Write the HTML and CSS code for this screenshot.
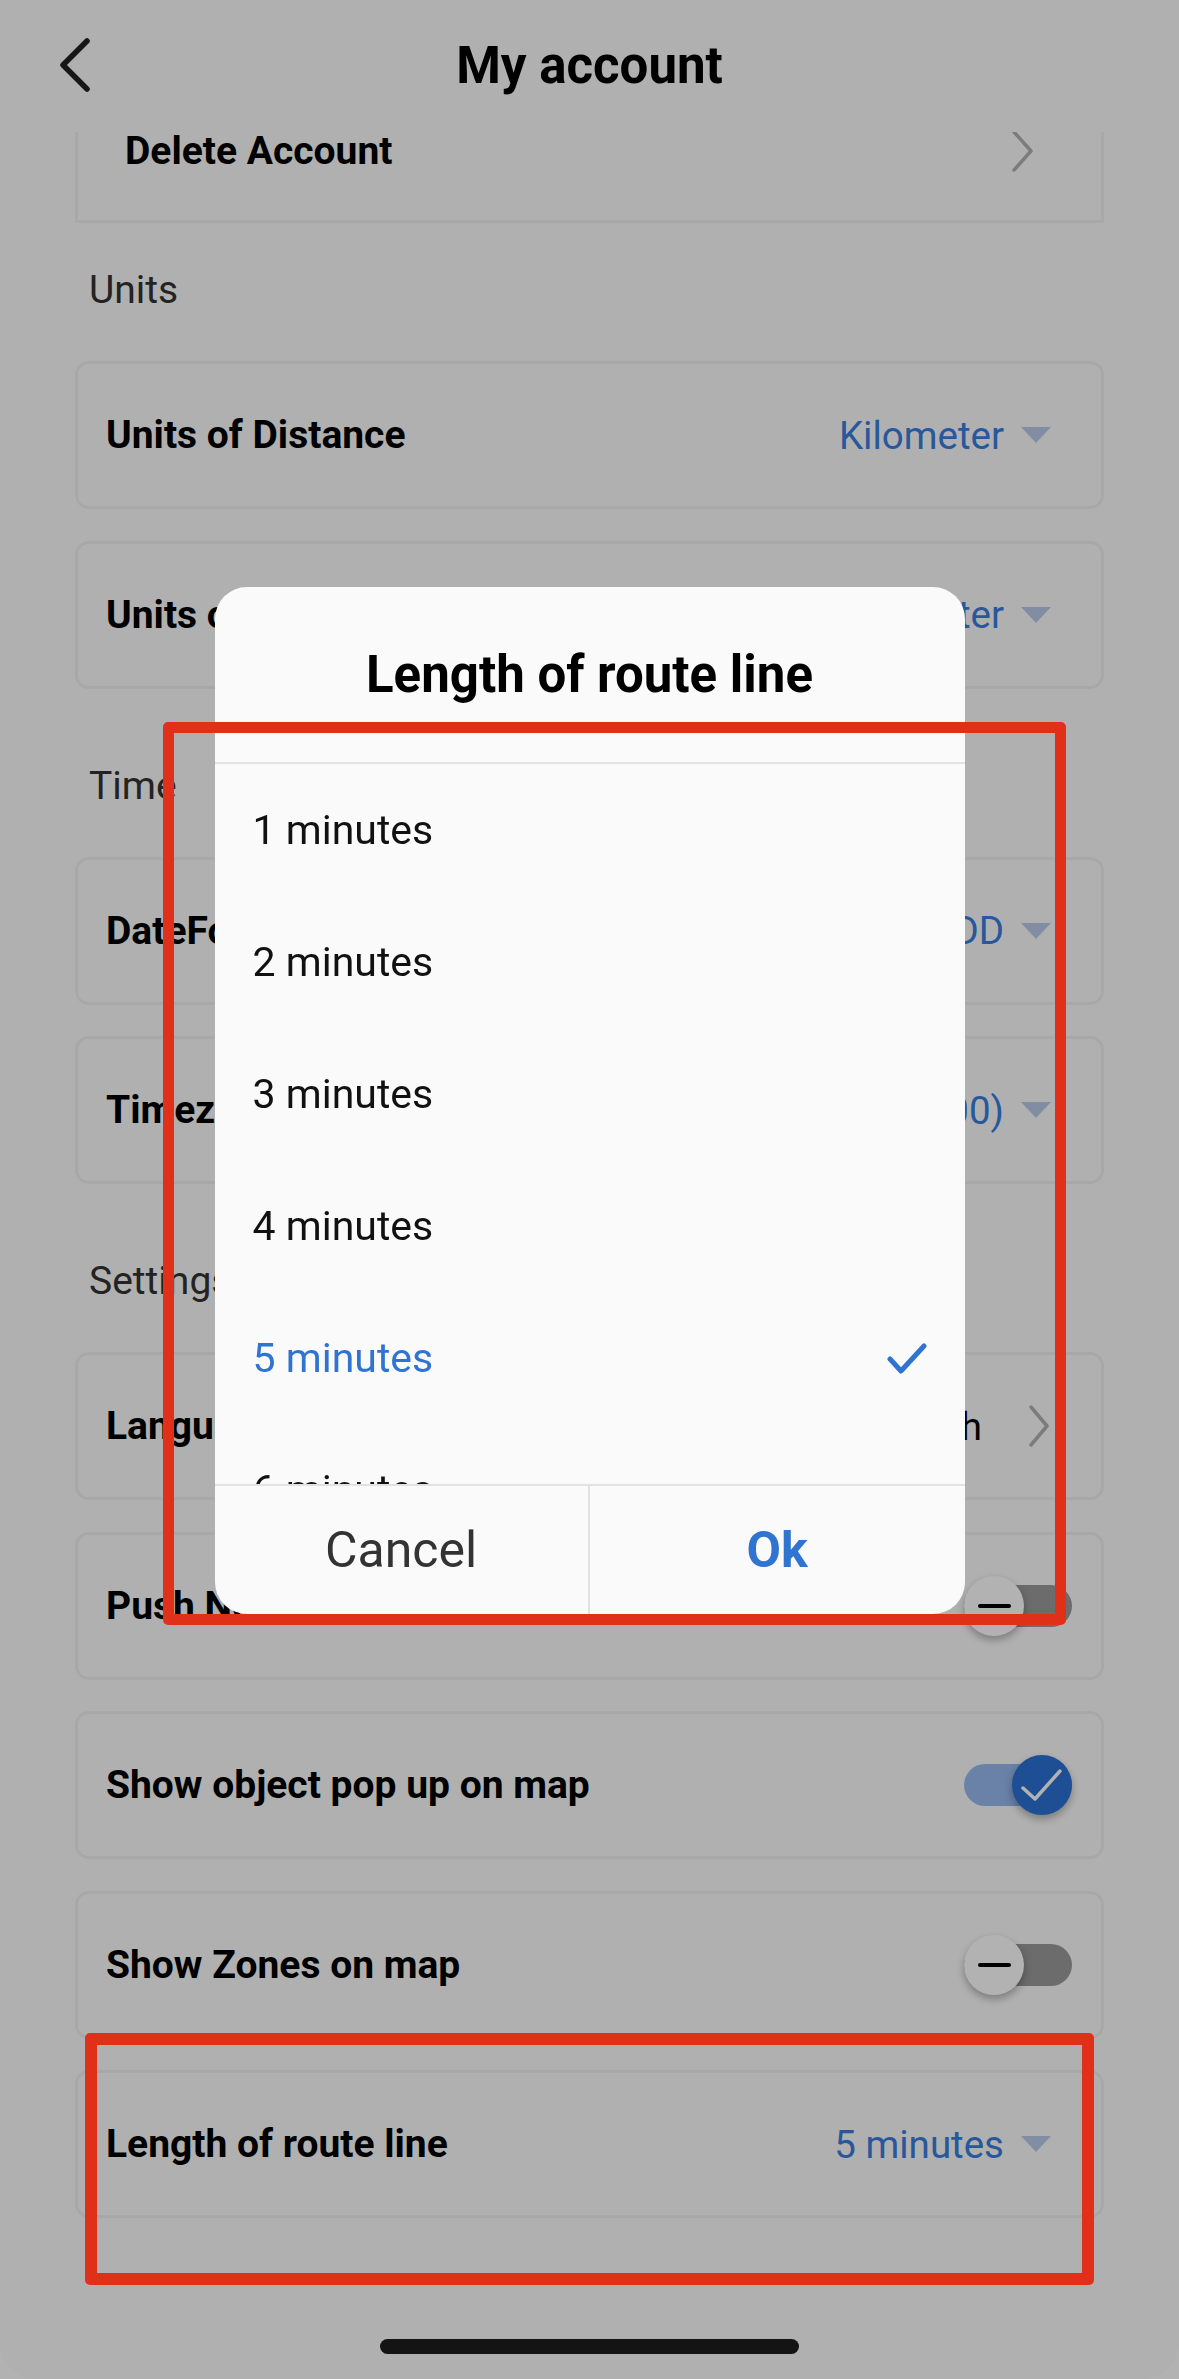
FILE: index.html
```html
<!DOCTYPE html>
<html lang="en">

<head>
    <meta charset="UTF-8">
    <meta name="viewport" content="width=device-width, initial-scale=1.0">
    <title>My account</title>
    <link rel="stylesheet" href="styles.css">
</head>

<body>
    <div class="screen">
        <!-- Cabeçalho -->
        <header class="topbar">
            <button class="back-btn" type="button">
                <svg width="34" height="56" viewBox="0 0 34 56">
                    <polyline points="29,4 5,28 29,52" fill="none" stroke="#222" stroke-width="5.5" stroke-linecap="round" stroke-linejoin="round" />
                </svg>
            </button>
            <h1>My account</h1>
            <span></span>
        </header>

        <!-- Conteúdo rolado -->
        <div class="scroll">
            <div class="scroll-inner">
                <div class="row row-plain">
                    <span class="row-label">Delete Account</span>
                    <svg class="chev" width="26" height="42" viewBox="0 0 26 42">
                        <polyline points="4,2 21,21 4,40" fill="none" stroke="#b2b2b2" stroke-width="3.5" stroke-linecap="round" stroke-linejoin="round" />
                    </svg>
                </div>

                <p class="section-title first">Units</p>
                <div class="group">
                    <div class="row">
                        <span class="row-label">Units of Distance</span>
                        <span class="row-value">Kilometer
                            <svg class="tri" width="30" height="16" viewBox="0 0 30 16"><polygon points="0,0 30,0 15,16" /></svg>
                        </span>
                    </div>
                    <div class="row">
                        <span class="row-label">Units of Volume</span>
                        <span class="row-value">Liter
                            <svg class="tri" width="30" height="16" viewBox="0 0 30 16"><polygon points="0,0 30,0 15,16" /></svg>
                        </span>
                    </div>
                </div>

                <p class="section-title">Time</p>
                <div class="group">
                    <div class="row">
                        <span class="row-label">DateFormat</span>
                        <span class="row-value">YYYY-MM-DD
                            <svg class="tri" width="30" height="16" viewBox="0 0 30 16"><polygon points="0,0 30,0 15,16" /></svg>
                        </span>
                    </div>
                    <div class="row">
                        <span class="row-label">Timezone</span>
                        <span class="row-value">(UTC+08:00)
                            <svg class="tri" width="30" height="16" viewBox="0 0 30 16"><polygon points="0,0 30,0 15,16" /></svg>
                        </span>
                    </div>
                </div>

                <p class="section-title">Settings</p>
                <div class="group">
                    <div class="row">
                        <span class="row-label">Language</span>
                        <span class="row-value lang">English
                            <svg class="chev" width="22" height="42" viewBox="0 0 22 42">
                                <polyline points="3,2 19,21 3,40" fill="none" stroke="#b2b2b2" stroke-width="3.5" stroke-linecap="round" stroke-linejoin="round" />
                            </svg>
                        </span>
                    </div>
                    <div class="row">
                        <span class="row-label">Push Notification</span>
                        <span class="switch"><span class="knob"><i class="minus"></i></span></span>
                    </div>
                    <div class="row">
                        <span class="row-label">Show object pop up on map</span>
                        <span class="switch on">
                            <span class="knob">
                                <svg width="60" height="60" viewBox="0 0 60 60">
                                    <polyline points="11,33 23,44 48,16" fill="none" stroke="#fff" stroke-width="3.5" stroke-linecap="round" stroke-linejoin="round" />
                                </svg>
                            </span>
                        </span>
                    </div>
                    <div class="row">
                        <span class="row-label">Show Zones on map</span>
                        <span class="switch"><span class="knob"><i class="minus"></i></span></span>
                    </div>
                    <div class="row">
                        <span class="row-label">Length of route line</span>
                        <span class="row-value">5 minutes
                            <svg class="tri" width="30" height="16" viewBox="0 0 30 16"><polygon points="0,0 30,0 15,16" /></svg>
                        </span>
                    </div>
                </div>
            </div>
        </div>

        <div class="home-area"><span class="home-bar"></span></div>
    </div>

    <!-- Fundo escurecido + diálogo -->
    <div class="backdrop">
        <div class="dialog">
            <div class="dialog-title">Length of route line</div>
            <ul class="dialog-list">
                <li>1 minutes</li>
                <li>2 minutes</li>
                <li>3 minutes</li>
                <li>4 minutes</li>
                <li class="selected">5 minutes
                    <svg width="40" height="31" viewBox="0 0 40 31">
                        <polyline points="3,16 14,28 37,3" fill="none" stroke="#2f74d0" stroke-width="5" stroke-linecap="round" stroke-linejoin="round" />
                    </svg>
                </li>
                <li>6 minutes</li>
                <li>7 minutes</li>
            </ul>
            <div class="dialog-actions">
                <button class="btn-cancel" type="button">Cancel</button>
                <button class="btn-ok" type="button">Ok</button>
            </div>
        </div>
    </div>

    <!-- Marcações em vermelho -->
    <div class="mark mark-list"></div>
    <div class="mark mark-row"></div>
</body>

</html>
```

FILE: styles.css
```css
body {
    margin: 0;
    font-family: Roboto, "Noto Sans", Arial, sans-serif;
    background-color: #ffffff;
}

.screen {
    width: 1179px;
    height: 2379px;
    background-color: #fdfdfd;
    display: flex;
    flex-direction: column;
    overflow: hidden;
    border-radius: 0 0 36px 36px;
}

/* Cabeçalho */
.topbar {
    height: 132px;
    flex-shrink: 0;
    display: grid;
    grid-template-columns: 1fr auto 1fr;
    align-items: center;
    background-color: #fdfdfd;
    position: relative;
    z-index: 2;
}

.back-btn {
    border: none;
    background: none;
    padding: 0 0 0 58px;
    display: flex;
    align-items: center;
    justify-self: start;
    margin-top: -2px;
}

.topbar h1 {
    margin: 0;
    font-size: 51px;
    font-weight: bold;
    color: #000;
    margin-top: -2px;
}

/* Lista de opções */
.scroll {
    flex: 1;
    overflow: hidden;
}

.scroll-inner {
    margin-top: -57px;
    padding: 0 75px;
}

.group {
    display: flex;
    flex-direction: column;
    gap: 31.5px;
}

.row {
    height: 148px;
    box-sizing: border-box;
    border: 3px solid #f1f1f1;
    border-radius: 14px;
    display: flex;
    align-items: center;
    justify-content: space-between;
    padding: 0 29px 0 28px;
}

.row-plain {
    border-radius: 0;
    border-top: none;
    padding: 6px 65px 0 47px;
}

.row-label {
    font-size: 39px;
    font-weight: bold;
    color: #000;
}

.row-value {
    display: flex;
    align-items: center;
    font-size: 38.5px;
    color: #3a7fe0;
    margin-right: 21px;
}

.row-value .tri {
    margin-left: 17px;
    fill: #b9cbe9;
}

.row-value.lang {
    color: #000;
    margin-right: 22px;
}

.row-value.lang .chev {
    margin-left: 46px;
}

.section-title {
    margin: 74px 0 0 14px;
    height: 94px;
    font-size: 39px;
    color: #333;
    line-height: 46px;
}

.section-title.first {
    margin-top: 44px;
}

/* Interruptores */
.switch {
    width: 108px;
    height: 42px;
    border-radius: 21px;
    background-color: #9b9b9b;
    display: flex;
    align-items: center;
    justify-content: flex-start;
}

.switch.on {
    background-color: #98baf0;
    justify-content: flex-end;
}

.knob {
    width: 60px;
    height: 60px;
    border-radius: 50%;
    background-color: #ffffff;
    box-shadow: 0 4px 8px rgba(0, 0, 0, 0.3);
    display: flex;
    align-items: center;
    justify-content: center;
}

.switch.on .knob {
    background-color: #2c72d6;
}

.minus {
    width: 33px;
    height: 4px;
    background-color: #000;
    border-radius: 2px;
}

.home-area {
    height: 90px;
    flex-shrink: 0;
    display: flex;
    justify-content: center;
    padding-top: 50px;
    box-sizing: border-box;
}

.home-bar {
    width: 419px;
    height: 15px;
    border-radius: 8px;
    background-color: #1d1d1d;
}

/* Fundo escurecido */
.backdrop {
    position: fixed;
    top: 0;
    left: 0;
    width: 1179px;
    height: 2379px;
    background-color: rgba(0, 0, 0, 0.3);
    display: flex;
    justify-content: center;
    align-items: flex-start;
    padding-top: 587px;
    box-sizing: border-box;
    z-index: 5;
}

.dialog {
    width: 750px;
    background-color: #fafafa;
    border-radius: 32px;
    overflow: hidden;
    display: flex;
    flex-direction: column;
}

.dialog-title {
    height: 175px;
    border-bottom: 2px solid #e2e2e2;
    display: flex;
    align-items: center;
    justify-content: center;
    font-size: 51px;
    font-weight: bold;
    color: #000;
}

.dialog-list {
    list-style: none;
    margin: 0;
    padding: 0;
    height: 720px;
    overflow: hidden;
}

.dialog-list li {
    height: 132px;
    display: flex;
    align-items: center;
    justify-content: space-between;
    padding: 0 38px 0 38px;
    font-size: 41px;
    color: #111;
}

.dialog-list li.selected {
    color: #2f74d0;
}

.dialog-actions {
    height: 128px;
    border-top: 2px solid #e2e2e2;
    display: grid;
    grid-template-columns: 1fr 1fr;
}

.dialog-actions button {
    border: none;
    background: none;
    font-family: Roboto, "Noto Sans", Arial, sans-serif;
    font-size: 50px;
    cursor: pointer;
}

.btn-cancel {
    color: #333;
    border-right: 2px solid #e2e2e2 !important;
}

.btn-ok {
    color: #2f74d0;
    font-weight: bold;
}

/* Marcações */
.mark {
    position: absolute;
    border: 11px solid #e0301a;
    border-radius: 5px;
    box-sizing: border-box;
    z-index: 10;
}

.mark-list {
    left: 163px;
    top: 722px;
    width: 903px;
    height: 903px;
}

.mark-row {
    left: 85px;
    top: 2033px;
    width: 1009px;
    height: 252px;
    border-width: 12px;
}
```
